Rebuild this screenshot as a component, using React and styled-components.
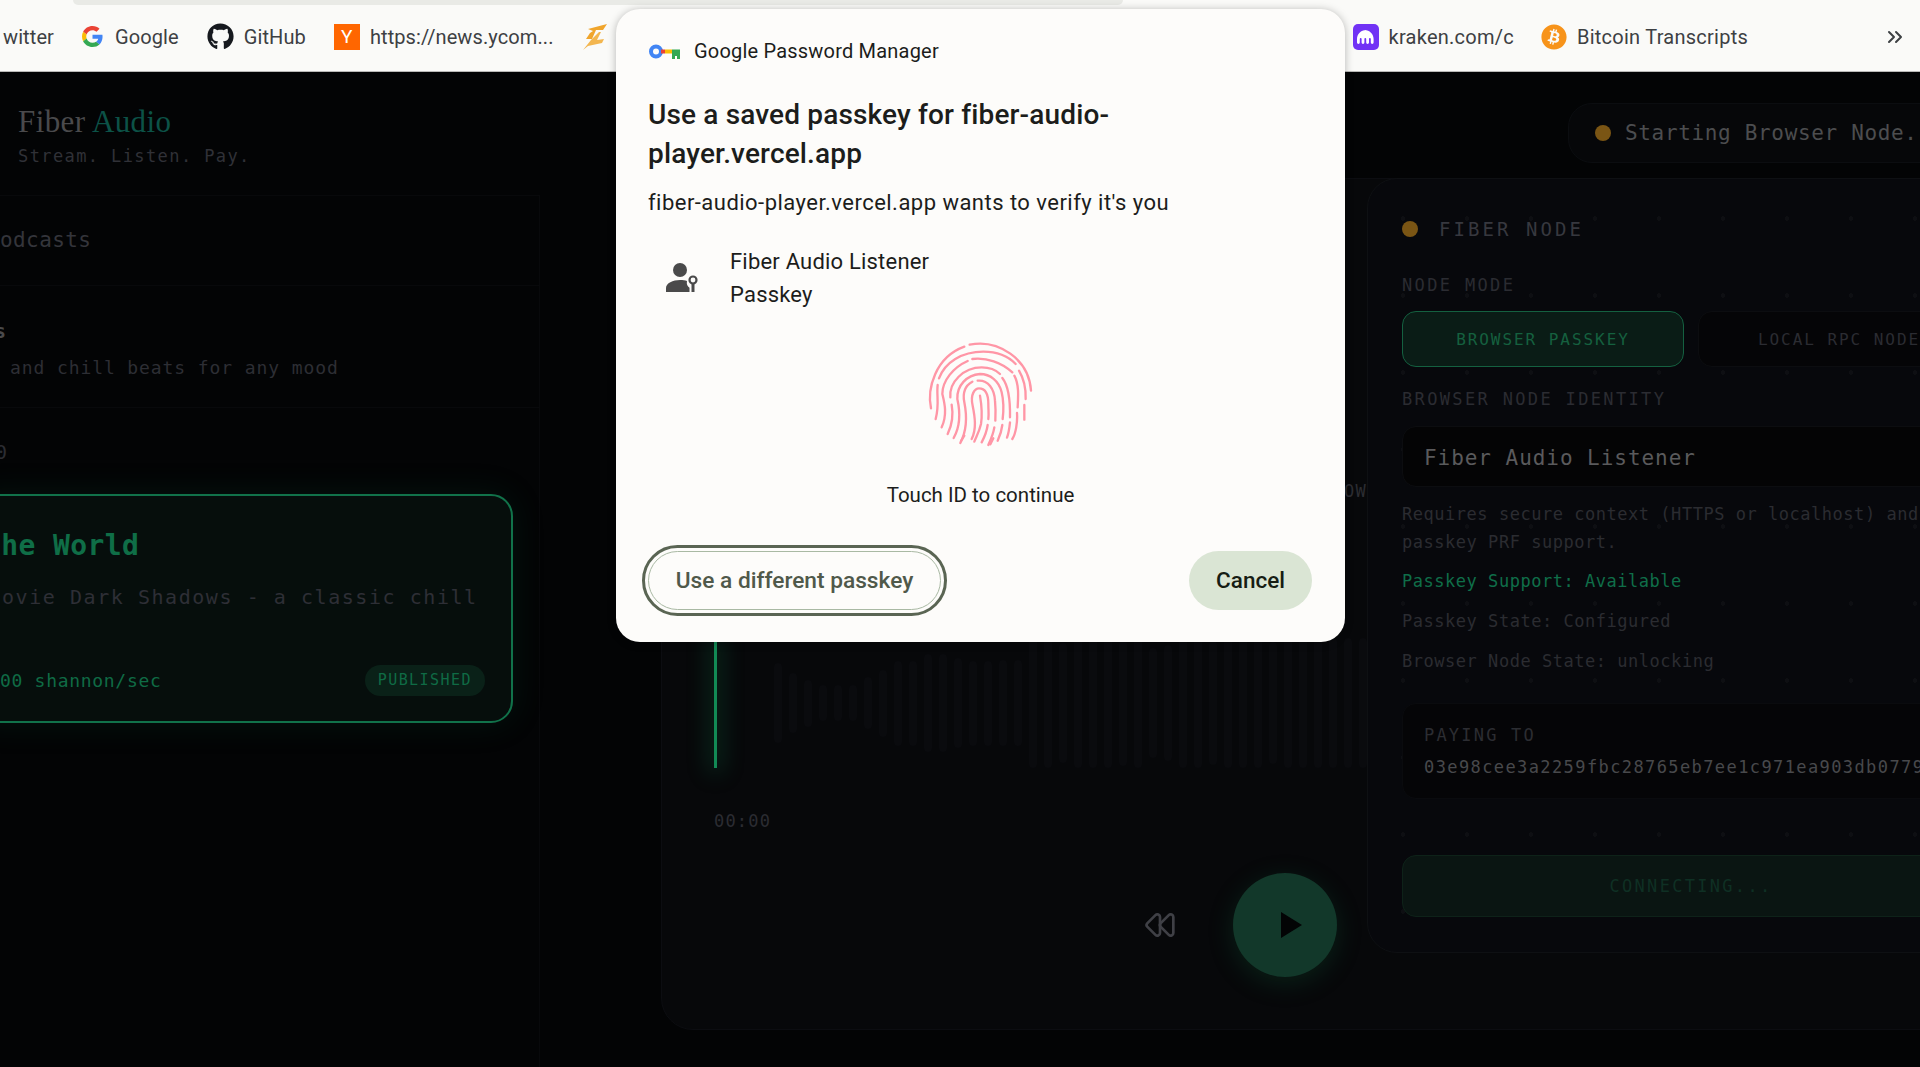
import styled, { createGlobalStyle } from 'styled-components';
import { ChevronsRight, Rewind, FastForward } from 'lucide-react';
import { FaGithub, FaBitcoin } from 'react-icons/fa';

const GlobalStyle = createGlobalStyle`
    html, body {
        margin: 0;
        padding: 0;
        background: #030405;
    }

    * {
        box-sizing: border-box;
    }
`;

const MONO = `'DejaVu Sans Mono', 'Liberation Mono', monospace`;
const SANS = `Roboto, 'Liberation Sans', sans-serif`;

const Screen = styled.div`
    position: relative;
    width: 100%;
    height: 100vh;
    overflow: hidden;
    background: #030405;
    font-family: ${MONO};
`;

// browser bookmarks bar
const BookmarksBar = styled.div`
    position: relative;
    display: flex;
    align-items: center;
    height: 72px;
    padding: 2px 13px 0 3px;
    background: #fafaf8;
    border-bottom: 1px solid #b9b9b7;
    font-family: ${SANS};
    font-size: 20px;
    letter-spacing: 0.1px;
    color: #3d4043;
`;

const TabStrip = styled.div`
    position: absolute;
    top: 0;
    left: 73px;
    width: 1050px;
    height: 5px;
    background: #e9eae6;
    border-radius: 0 0 12px 12px;
`;

const BookmarkGroup = styled.div`
    display: flex;
    align-items: center;
    gap: 28px;
`;

const RightGroup = styled(BookmarkGroup)`
    margin-left: auto;
    margin-right: 135px;
    gap: 27px;
    letter-spacing: 0.25px;
`;

const Bookmark = styled.div`
    display: flex;
    align-items: center;
    gap: ${(p) => p.$gap || 10}px;
    white-space: nowrap;
`;

const HnIcon = styled.div`
    display: flex;
    align-items: center;
    justify-content: center;
    width: 26px;
    height: 26px;
    background: #ff6600;
    font-size: 19px;
    color: #fff;
`;

const KrakenIcon = styled.div`
    display: flex;
    align-items: center;
    justify-content: center;
    width: 26px;
    height: 26px;
    border-radius: 5px;
    background: #7132f5;
`;

// header
const Header = styled.header`
    display: flex;
    justify-content: space-between;
    align-items: flex-start;
    height: 106px;
    padding-top: 32px;
    padding-left: 18px;
`;

const Title = styled.h1`
    margin: 0;
    font-family: 'Liberation Serif', serif;
    font-weight: 400;
    font-size: 31px;
    line-height: 36px;
    letter-spacing: 0.4px;
    color: #4a4a4c;

    span {
        color: #0c5247;
    }
`;

const Tagline = styled.div`
    margin-top: 5px;
    font-size: 17px;
    line-height: 22px;
    letter-spacing: 1.4px;
    color: #303137;
`;

const StatusPill = styled.div`
    display: flex;
    align-items: center;
    gap: 14px;
    width: 400px;
    height: 60px;
    margin-top: -1px;
    margin-right: -48px;
    padding-left: 26px;
    border: 1px solid #0b0d10;
    border-radius: 24px;
    background: #060709;
    font-size: 21px;
    line-height: 62px;
    letter-spacing: 0.66px;
    white-space: nowrap;
    color: #4c4d4f;
`;

const Dot = styled.span`
    flex: none;
    width: 16px;
    height: 16px;
    border-radius: 50%;
    background: ${(p) => p.$color || '#7a5514'};
`;

const Columns = styled.main`
    display: flex;
    align-items: flex-start;
`;

// playlist sidebar, its left part runs off the screen
const Sidebar = styled.aside`
    flex: none;
    width: 540px;
    height: 900px;
    margin-top: 17px;
    border-top: 1px solid #08090b;
    border-right: 1px solid #08090b;
`;

const SidebarHead = styled.div`
    height: 90px;
    border-bottom: 1px solid #08090b;
    font-size: 21px;
    line-height: 88px;
    letter-spacing: 0.4px;
    color: #34353b;
`;

const AlbumRow = styled.div`
    height: 122px;
    padding-top: 30px;
    border-bottom: 1px solid #08090b;
`;

const AlbumName = styled.div`
    margin-left: -6px;
    font-size: 20px;
    font-weight: 700;
    line-height: 30px;
    color: #4a4a4c;
`;

const AlbumText = styled.div`
    margin-top: 10px;
    margin-left: 10px;
    font-size: 18px;
    line-height: 24px;
    letter-spacing: 0.9px;
    white-space: nowrap;
    color: #2d2e34;
`;

const CountLine = styled.div`
    margin: 31px 0 29px -5px;
    font-size: 20px;
    line-height: 26px;
    color: #2c2d33;
`;

const TrackCard = styled.div`
    width: 543px;
    height: 229px;
    margin-left: -30px;
    padding: 35px 26px 0 30px;
    border: 2px solid #11724a;
    border-radius: 22px;
    background: #060e0c;
    box-shadow: 0 0 34px rgba(18, 120, 75, 0.14);
`;

const TrackTitle = styled.div`
    margin-left: -18px;
    font-size: 28px;
    font-weight: 700;
    line-height: 30px;
    letter-spacing: 0.4px;
    white-space: nowrap;
    color: #0f6e47;
`;

const TrackText = styled.div`
    margin-top: 23px;
    font-size: 20px;
    line-height: 26px;
    letter-spacing: 1.55px;
    white-space: nowrap;
    color: #2e2f36;
`;

const TrackFoot = styled.div`
    display: flex;
    justify-content: space-between;
    align-items: center;
    margin-top: 55px;
`;

const TrackRate = styled.div`
    margin-left: -2px;
    font-size: 18px;
    letter-spacing: 0.7px;
    color: #0f6b45;
`;

const Badge = styled.div`
    padding: 0 13px;
    height: 31px;
    border-radius: 16px;
    background: #0a2118;
    font-size: 15px;
    line-height: 31px;
    letter-spacing: 1.45px;
    color: #0f6b45;
`;

// player
const PlayerPanel = styled.section`
    flex: none;
    width: 1300px;
    height: 852px;
    margin-left: 121px;
    padding: 301px 0 0 52px;
    border: 1px solid #0c0d11;
    border-radius: 32px;
    background: #07080a;
`;

const PanelHint = styled.div`
    width: 653px;
    font-size: 17px;
    line-height: 22px;
    letter-spacing: 1.2px;
    text-align: right;
    color: #2c2d32;
`;

const Waveform = styled.div`
    position: relative;
    display: flex;
    align-items: center;
    gap: 7px;
    height: 130px;
    margin-top: 136px;
    padding-left: 60px;
`;

const WaveBar = styled.div`
    flex: none;
    width: 8px;
    border-radius: 4px;
    background: #0a0b0e;
`;

const Playhead = styled.div`
    position: absolute;
    top: 0;
    left: 0;
    width: 3px;
    height: 100%;
    background: #128a55;
    box-shadow: 0 0 22px 5px rgba(18, 138, 85, 0.28);
`;

const TimeLabel = styled.div`
    margin-top: 42px;
    font-size: 17px;
    line-height: 22px;
    letter-spacing: 1.2px;
    color: #2b2c32;
`;

const Controls = styled.div`
    display: flex;
    justify-content: center;
    align-items: center;
    gap: 57px;
    width: 1141px;
    margin-top: 41px;
    color: #3f4046;
`;

const PlayButton = styled.div`
    display: flex;
    align-items: center;
    justify-content: center;
    width: 104px;
    height: 104px;
    padding-left: 13px;
    border-radius: 50%;
    background: #12382a;
    box-shadow: 0 6px 26px rgba(18, 120, 75, 0.22);
`;

// fiber node panel
const NodePanel = styled.section`
    position: absolute;
    top: 178px;
    left: 1367px;
    width: 648px;
    height: 775px;
    padding: 37px 34px 0;
    border: 1px solid #0e1013;
    border-radius: 30px;
    background-color: #07080c;
    background-image: radial-gradient(circle, #0e0f13 2px, transparent 2.5px);
    background-size: 64px 77px;
    background-position: 3px 1px;
`;

const NodeHead = styled.div`
    display: flex;
    align-items: center;
    gap: 21px;
    height: 26px;
    font-size: 19px;
    letter-spacing: 3.05px;
    color: #37383f;
`;

const FieldLabel = styled.div`
    margin-top: ${(p) => p.$top}px;
    font-size: 17px;
    line-height: 20px;
    letter-spacing: 2.35px;
    color: #2b2c32;
`;

const ModeRow = styled.div`
    display: grid;
    grid-template-columns: 1fr 1fr;
    gap: 14px;
    margin-top: 16px;
`;

const ModeButton = styled.div`
    height: 56px;
    border: 1px solid ${(p) => (p.$active ? '#146040' : '#0c0d10')};
    border-radius: 14px;
    background: ${(p) => (p.$active ? '#0a1c16' : '#050507')};
    font-size: 16px;
    line-height: 55px;
    letter-spacing: 1.95px;
    text-align: center;
    color: ${(p) => (p.$active ? '#15603f' : '#2b2c32')};
`;

const IdentityInput = styled.div`
    height: 61px;
    margin-top: 17px;
    padding-left: 21px;
    border: 1px solid #0c0d10;
    border-radius: 14px;
    background: #040405;
    font-size: 21px;
    line-height: 62px;
    letter-spacing: 0.95px;
    color: #5a5a5c;
`;

const Note = styled.div`
    margin-top: ${(p) => p.$top}px;
    font-size: 17px;
    line-height: ${(p) => p.$line || 24}px;
    letter-spacing: 0.53px;
    color: ${(p) => p.$color || '#2b2c31'};
`;

const PayBox = styled.div`
    height: 96px;
    margin-top: 30px;
    padding: 21px 0 0 21px;
    border: 1px solid #0a0b0e;
    border-radius: 14px;
    background: #050507;
    overflow: hidden;
`;

const PayLabel = styled.div`
    font-size: 17px;
    line-height: 20px;
    letter-spacing: 2.2px;
    color: #2c2d32;
`;

const PayAddress = styled.div`
    margin-top: 12px;
    font-size: 17px;
    line-height: 20px;
    letter-spacing: 1.4px;
    white-space: nowrap;
    color: #48494c;
`;

const ConnectButton = styled.div`
    height: 62px;
    margin-top: 56px;
    border: 1px solid #0e2219;
    border-radius: 14px;
    background: #0a1512;
    font-size: 17px;
    line-height: 60px;
    letter-spacing: 2.3px;
    text-align: center;
    color: #0f3024;
`;

// passkey dialog
const Dialog = styled.div`
    position: absolute;
    top: 9px;
    left: 616px;
    width: 729px;
    height: 633px;
    padding: 29px 33px 0;
    border-radius: 24px;
    background: #fdfcfa;
    box-shadow: 0 1px 8px rgba(0, 0, 0, 0.28);
    font-family: ${SANS};
    color: #1c1d1b;
`;

const DialogBrand = styled.div`
    display: flex;
    align-items: center;
    gap: 14px;
    height: 26px;
    font-size: 20px;
    letter-spacing: 0.2px;
`;

const DialogTitle = styled.h2`
    margin: 31px 0 0 -1px;
    width: 520px;
    font-size: 28px;
    font-weight: 500;
    line-height: 39px;
    letter-spacing: 0.15px;
`;

const DialogText = styled.div`
    margin: 17px 0 0 -1px;
    font-size: 22px;
    line-height: 26px;
    letter-spacing: 0.47px;
`;

const AccountRow = styled.div`
    display: flex;
    align-items: center;
    gap: 32px;
    margin-top: 29px;
    padding-left: 17px;
    font-size: 22px;
    line-height: 33px;
    letter-spacing: 0.2px;
`;

const FingerprintWrap = styled.div`
    display: flex;
    justify-content: center;
    margin-top: 28px;
`;

const TouchHint = styled.div`
    margin-top: 31px;
    font-size: 20.5px;
    line-height: 26px;
    text-align: center;
`;

const DialogActions = styled.div`
    display: flex;
    justify-content: space-between;
    align-items: center;
    margin: 43px 0 0 -1px;
`;

const GhostButton = styled.div`
    width: 293px;
    height: 59px;
    border: 1px solid #a9b9a3;
    border-radius: 30px;
    outline: 3px solid #5a6553;
    outline-offset: 3px;
    font-size: 22.7px;
    font-weight: 500;
    line-height: 57px;
    text-align: center;
    color: #50594a;
`;

const CancelButton = styled.div`
    width: 123px;
    height: 59px;
    border-radius: 30px;
    background: #dae5d4;
    font-size: 22.5px;
    font-weight: 500;
    line-height: 59px;
    text-align: center;
    color: #171d14;
`;

const GoogleIcon = () => (
    <svg width='21' height='21' viewBox='0 0 48 48'>
        <path fill='#EA4335' d='M24 9.5c3.54 0 6.71 1.22 9.21 3.6l6.85-6.85C35.9 2.38 30.47 0 24 0 14.62 0 6.51 5.38 2.56 13.22l7.98 6.19C12.43 13.72 17.74 9.5 24 9.5z' />
        <path fill='#4285F4' d='M46.98 24.55c0-1.57-.15-3.09-.38-4.55H24v9.02h12.94c-.58 2.96-2.26 5.48-4.78 7.18l7.73 6c4.51-4.18 7.09-10.36 7.09-17.65z' />
        <path fill='#FBBC05' d='M10.53 28.59c-.48-1.45-.76-2.99-.76-4.59s.27-3.14.76-4.59l-7.98-6.19C.92 16.46 0 20.12 0 24c0 3.88.92 7.54 2.56 10.78l7.97-6.19z' />
        <path fill='#34A853' d='M24 48c6.48 0 11.93-2.13 15.89-5.81l-7.73-6c-2.15 1.45-4.92 2.3-8.16 2.3-6.26 0-11.57-4.22-13.47-9.91l-7.98 6.19C6.51 42.62 14.62 48 24 48z' />
    </svg>
);

const ZIcon = () => (
    <svg width='26' height='26' viewBox='0 0 26 26'>
        <path fill='#f0a52c' d='M6 5 L25 0 L21 6 L14 6 L10 15 L4 15 L8 9 L11 7z' />
        <path fill='#f3b64f' d='M9 16 L17 8 L19 8 L15 16 L22 15 L20 19 L6 22 L1 26z' />
    </svg>
);

const KrakenGlyph = () => (
    <svg width='18' height='14' viewBox='0 0 18 14'>
        <path fill='#fff' d='M9 0C4 0 0 4 0 9v3.5a1.4 1.4 0 0 0 2.8 0V9a.9.9 0 0 1 1.8 0v3.5a1.4 1.4 0 0 0 2.8 0V9a.9.9 0 0 1 1.8 0v3.5a1.4 1.4 0 0 0 2.8 0V9a.9.9 0 0 1 1.8 0v3.5a1.4 1.4 0 0 0 2.8 0V9c0-5-4-9-9-9z' />
    </svg>
);

const PasswordKeyIcon = () => (
    <svg width='31' height='15' viewBox='0 0 31 15'>
        <circle cx='7' cy='7.5' r='5' fill='none' stroke='#4285f4' strokeWidth='4' />
        <rect x='12' y='5.5' width='4' height='4' fill='#ea4335' />
        <rect x='16' y='5.5' width='7' height='4' fill='#fbbc05' />
        <path fill='#34a853' d='M23 5.5h8V15h-3v-3h-2v3h-3z' />
    </svg>
);

const PersonKeyIcon = () => (
    <svg width='32' height='30' viewBox='0 0 32 30'>
        <circle cx='14' cy='7' r='7' fill='#4a4a4a' />
        <path fill='#4a4a4a' d='M0 29v-4c0-5 7-8 14-8 3 0 5 .4 7 1-.7 3 .4 5.500 2.500 6.800V29z' />
        <circle cx='27' cy='17' r='3.500' fill='none' stroke='#4a4a4a' strokeWidth='2.200' />
        <path stroke='#4a4a4a' strokeWidth='3' d='M27 21v8' />
    </svg>
);

// ridges of the Touch ID fingerprint, split where the drawing has its gaps
const RIDGES = [
    'M18 208C6 150 30 55 118 23',
    'M134 17C220 0 312 60 318 155',
    'M42 118C60 70 110 38 175 38C215 38 250 52 272 75',
    'M282 95C297 120 303 150 302 180',
    'M298 198L298 242',
    'M38 138C34 170 44 195 32 240',
    'M50 265C68 225 58 190 52 165C52 125 85 85 128 66',
    'M142 60C185 55 230 70 262 100',
    'M268 110C282 135 280 170 278 205',
    'M276 222C278 250 272 285 262 300',
    'M68 285C85 250 85 225 80 197',
    'M76 175C72 130 115 85 170 85C195 85 215 95 225 105',
    'M232 117C250 140 256 180 255 235',
    'M255 250C253 270 250 285 246 296',
    'M86 297C108 258 106 220 97 180C95 140 125 108 165 105C195 105 222 125 230 160C236 185 236 215 233 240',
    'M232 258C230 275 225 290 218 305',
    'M106 312C128 270 125 225 118 190C112 160 120 140 142 128',
    'M158 125C190 122 208 150 210 185C212 205 212 225 211 245',
    'M208 265C205 285 198 300 190 318',
    'M140 300C155 270 150 235 143 200C135 165 150 148 162 148C185 148 190 170 190 195C190 215 192 225 190 240',
    'M188 258C185 280 178 295 170 310',
    'M165 170C170 200 172 230 168 255C162 280 155 290 148 308',
    'M108 306L118 290',
    'M196 316L205 298',
];

const Fingerprint = () => (
    <svg width='112' height='112' viewBox='0 0 336 336' fill='none' stroke='#ff96a6' strokeWidth='7' strokeLinecap='round'>
        {RIDGES.map((d) => (
            <path key={d} d={d} />
        ))}
    </svg>
);

const PlayGlyph = () => (
    <svg width='21' height='26' viewBox='0 0 21 26'>
        <path fill='#030405' d='M0 0L21 13L0 26z' />
    </svg>
);

const BARS = [
    80, 60, 47, 36, 36, 36, 52, 67, 85, 85, 98, 98, 90, 85, 85,
    86, 86, 130, 130, 120, 130, 130, 130, 126, 130, 110, 116, 130, 130, 124,
    130, 130, 130, 122, 130, 130, 130, 130, 130, 130, 130, 130, 124, 130,
    130, 130, 130, 130, 120, 130,
];

const App = () => {
    return (
        <Screen>
            <GlobalStyle />
            <BookmarksBar>
                <TabStrip />
                <BookmarkGroup>
                    <Bookmark>witter</Bookmark>
                    <Bookmark $gap={12}>
                        <GoogleIcon />
                        Google
                    </Bookmark>
                    <Bookmark>
                        <FaGithub size={27} color='#16191e' />
                        GitHub
                    </Bookmark>
                    <Bookmark>
                        <HnIcon>Y</HnIcon>
                        https://news.ycom...
                    </Bookmark>
                    <Bookmark>
                        <ZIcon />
                    </Bookmark>
                </BookmarkGroup>
                <RightGroup>
                    <Bookmark>
                        <KrakenIcon>
                            <KrakenGlyph />
                        </KrakenIcon>
                        kraken.com/c
                    </Bookmark>
                    <Bookmark>
                        <FaBitcoin size={26} color='#f7931a' />
                        Bitcoin Transcripts
                    </Bookmark>
                </RightGroup>
                <ChevronsRight size={24} strokeWidth={2} />
            </BookmarksBar>

            <Header>
                <div>
                    <Title>
                        Fiber <span>Audio</span>
                    </Title>
                    <Tagline>Stream. Listen. Pay.</Tagline>
                </div>
                <StatusPill>
                    <Dot />
                    Starting Browser Node...
                </StatusPill>
            </Header>

            <Columns>
                <Sidebar>
                    <SidebarHead>odcasts</SidebarHead>
                    <AlbumRow>
                        <AlbumName>s</AlbumName>
                        <AlbumText>and chill beats for any mood</AlbumText>
                    </AlbumRow>
                    <CountLine>0</CountLine>
                    <TrackCard>
                        <TrackTitle>the World</TrackTitle>
                        <TrackText>ovie Dark Shadows - a classic chill</TrackText>
                        <TrackFoot>
                            <TrackRate>00 shannon/sec</TrackRate>
                            <Badge>PUBLISHED</Badge>
                        </TrackFoot>
                    </TrackCard>
                </Sidebar>

                <PlayerPanel>
                    <PanelHint>NOW</PanelHint>
                    <Waveform>
                        {BARS.map((h, i) => (
                            <WaveBar key={i} style={{ height: h }} />
                        ))}
                        <Playhead />
                    </Waveform>
                    <TimeLabel>00:00</TimeLabel>
                    <Controls>
                        <Rewind size={32} strokeWidth={2} />
                        <PlayButton>
                            <PlayGlyph />
                        </PlayButton>
                        <FastForward size={32} strokeWidth={2} />
                    </Controls>
                </PlayerPanel>
            </Columns>

            <NodePanel>
                <NodeHead>
                    <Dot />
                    FIBER NODE
                </NodeHead>
                <FieldLabel $top={33}>NODE MODE</FieldLabel>
                <ModeRow>
                    <ModeButton $active>BROWSER PASSKEY</ModeButton>
                    <ModeButton>LOCAL RPC NODE</ModeButton>
                </ModeRow>
                <FieldLabel $top={22}>BROWSER NODE IDENTITY</FieldLabel>
                <IdentityInput>Fiber Audio Listener</IdentityInput>
                <Note $top={13} $line={28}>
                    Requires secure context (HTTPS or localhost) and passkey PRF support.
                </Note>
                <Note $top={13} $color='#0f6e49'>Passkey Support: Available</Note>
                <Note $top={16}>Passkey State: Configured</Note>
                <Note $top={16}>Browser Node State: unlocking</Note>
                <PayBox>
                    <PayLabel>PAYING TO</PayLabel>
                    <PayAddress>03e98cee3a2259fbc28765eb7ee1c971ea903db0779</PayAddress>
                </PayBox>
                <ConnectButton>CONNECTING...</ConnectButton>
            </NodePanel>

            <Dialog>
                <DialogBrand>
                    <PasswordKeyIcon />
                    Google Password Manager
                </DialogBrand>
                <DialogTitle>Use a saved passkey for fiber-audio-player.vercel.app</DialogTitle>
                <DialogText>fiber-audio-player.vercel.app wants to verify it's you</DialogText>
                <AccountRow>
                    <PersonKeyIcon />
                    <div>
                        Fiber Audio Listener
                        <br />
                        Passkey
                    </div>
                </AccountRow>
                <FingerprintWrap>
                    <Fingerprint />
                </FingerprintWrap>
                <TouchHint>Touch ID to continue</TouchHint>
                <DialogActions>
                    <GhostButton>Use a different passkey</GhostButton>
                    <CancelButton>Cancel</CancelButton>
                </DialogActions>
            </Dialog>
        </Screen>
    );
};

export default App;
